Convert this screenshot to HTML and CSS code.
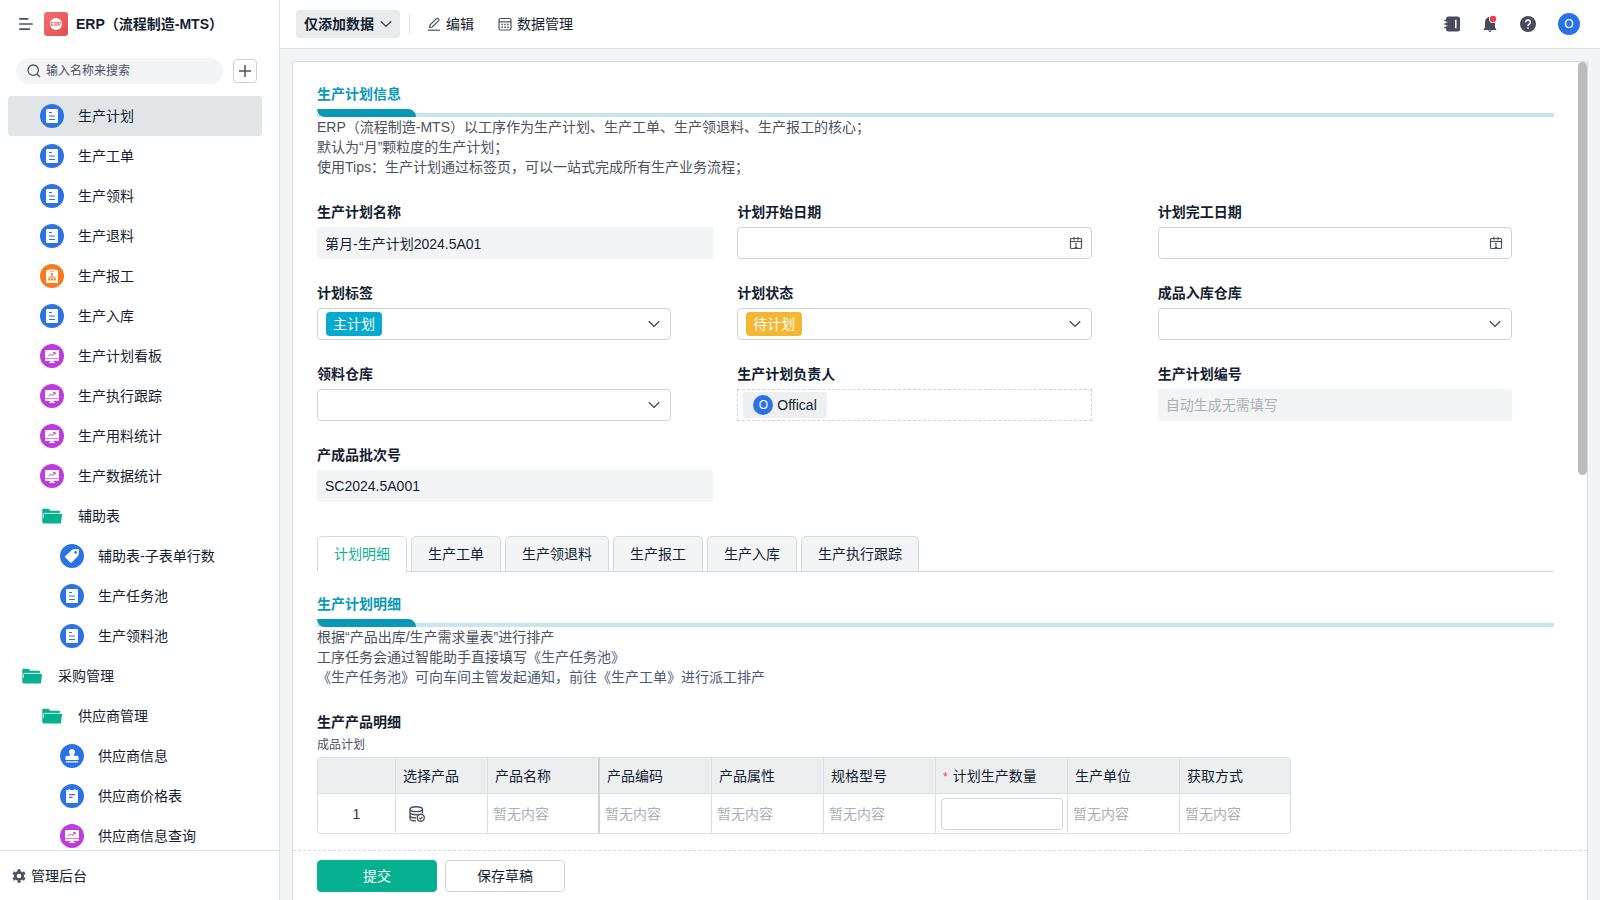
FILE: index.html
```html
<!DOCTYPE html>
<html lang="zh-CN">
<head>
<meta charset="utf-8">
<title>ERP（流程制造-MTS）</title>
<link rel="stylesheet" href="styles.css">
</head>
<body>
<svg class="sprite" aria-hidden="true">
  <symbol id="i-form" viewBox="0 0 24 24">
    <circle cx="12" cy="12" r="12" fill="#2a72e5"/>
    <rect x="6" y="5" width="12" height="14" rx="1" fill="#fff"/>
    <path d="M9 8.500h3M9 12h6M9 15.500h6" stroke="#2a72e5" stroke-width="1.1" fill="none"/>
  </symbol>
  <symbol id="i-flow" viewBox="0 0 24 24">
    <circle cx="12" cy="12" r="12" fill="#f97a1c"/>
    <path d="M7 6h2V5.200h6V6h2a1 1 0 0 1 1 1v11a1 1 0 0 1-1 1H7a1 1 0 0 1-1-1V7a1 1 0 0 1 1-1z" fill="#fff"/>
    <path d="M9.500 7h5" stroke="#f97a1c" stroke-width=".8"/>
    <path d="M12 10v5M9.200 15v-2h5.600v2" stroke="#f97a1c" stroke-width=".9" fill="none"/>
    <path d="M11 9.300h2v2h-2zM8.200 14.400h2v2h-2zM11 14.400h2v2h-2zM13.800 14.400h2v2h-2z" fill="#f97a1c"/>
  </symbol>
  <symbol id="i-board" viewBox="0 0 24 24">
    <circle cx="12" cy="12" r="12" fill="#bf3bdb"/>
    <rect x="5" y="6" width="14" height="11" rx="1" fill="#fff"/>
    <path d="M5 14.600h14" stroke="#bf3bdb" stroke-width=".7"/>
    <path d="M10.500 17h3v1H15v1H9v-1h1.500z" fill="#fff"/>
    <path d="M8.500 12l2-2 1.500 1.500L15 8.800M13 8.600h2.200v2" stroke="#bf3bdb" stroke-width="1" fill="none"/>
  </symbol>
  <symbol id="i-tag" viewBox="0 0 24 24">
    <circle cx="12" cy="12" r="12" fill="#2a72e5"/>
    <path d="M12.500 5.500l5-.5a1.300 1.300 0 0 1 1.500 1.500l-.5 5-6.800 7a1 1 0 0 1-1.400 0L5.300 13.400a1 1 0 0 1 0-1.400z" fill="#fff"/>
    <circle cx="15.600" cy="8.400" r="1.300" fill="#2a72e5"/>
  </symbol>
  <symbol id="i-stamp" viewBox="0 0 24 24">
    <circle cx="12" cy="12" r="12" fill="#2a72e5"/>
    <path d="M12 5a3 3 0 0 1 2 5.300c-.4.600-.3 1.200.3 1.400H17a1.500 1.500 0 0 1 1.500 1.500V16h-13v-2.800A1.500 1.500 0 0 1 7 11.700h2.700c.6-.2.700-.8.300-1.400A3 3 0 0 1 12 5zM6 17.300h12v1.200H6z" fill="#fff"/>
  </symbol>
  <symbol id="i-note" viewBox="0 0 24 24">
    <circle cx="12" cy="12" r="12" fill="#2a72e5"/>
    <path d="M7 6h1.500V5h1.200v1h4.600V5h1.200v1H17a1 1 0 0 1 1 1v11a1 1 0 0 1-1 1H7a1 1 0 0 1-1-1V7a1 1 0 0 1 1-1z" fill="#fff"/>
    <path d="M9 10.600h6M9 13.400h3.500" stroke="#2a72e5" stroke-width="1.200"/>
  </symbol>
  <symbol id="i-folder" viewBox="0 0 24 24">
    <path d="M2.300 19V5.800a1 1 0 0 1 1-1h5.200l1.800 2H19a1 1 0 0 1 1 1v2" fill="#07b08f"/>
    <path d="M4.500 9.500h16.700a.8.800 0 0 1 .8 1l-.9 8.100a1 1 0 0 1-1 .9H4a1.200 1.200 0 0 1-1.200-1.400z" fill="#07b08f"/>
    <path d="M3.300 14V10.600a1.200 1.200 0 0 1 1.200-1.200H21.500" stroke="#fff" stroke-width=".8" fill="none"/>
  </symbol>
  <symbol id="i-down" viewBox="0 0 12 12">
    <path d="M.8 3.200L6 8.400l5.200-5.200" stroke="#3c4353" stroke-width="1.300" fill="none"/>
  </symbol>
  <symbol id="i-date" viewBox="0 0 14 14">
    <rect x="1.500" y="2.500" width="11" height="10" rx="1" fill="none" stroke="#4b5160" stroke-width="1.200"/>
    <path d="M1.500 5.500h11M5 .8v3.700M9 .8v3.700M5.800 7.500H7v4.500M5.500 11.600h3" fill="none" stroke="#4b5160" stroke-width="1.100"/>
  </symbol>
</svg>

<div class="app">
  <aside class="sidebar">
    <div class="brand">
      <button class="icon-btn" type="button" aria-label="菜单">
        <svg width="14" height="14" viewBox="0 0 14 14"><path d="M.8 1.800h8M.8 7h12.400M.8 12.200h9.500" stroke="#4b5160" stroke-width="1.700" stroke-linecap="round"/></svg>
      </button>
      <span class="logo"><span class="logo-disc">ERP</span></span>
      <h1 class="brand-name">ERP（流程制造-MTS）</h1>
    </div>
    <div class="search-row">
      <label class="search">
        <svg width="14" height="14" viewBox="0 0 14 14"><circle cx="6.200" cy="6.200" r="5.200" fill="none" stroke="#4b5160" stroke-width="1.300"/><path d="M10 10l3 3" stroke="#4b5160" stroke-width="1.300"/></svg>
        <input class="search-input" type="text" placeholder="输入名称来搜索" aria-label="搜索">
      </label>
      <button class="add" type="button" aria-label="添加">
        <svg width="14" height="14" viewBox="0 0 14 14"><path d="M7 1v12M1 7h12" stroke="#4b5160" stroke-width="1.500"/></svg>
      </button>
    </div>
    <nav class="nav">
      <a class="nav-item level-1 active" href="#"><svg class="nav-icon"><use href="#i-form"/></svg>生产计划</a>
      <a class="nav-item level-1" href="#"><svg class="nav-icon"><use href="#i-form"/></svg>生产工单</a>
      <a class="nav-item level-1" href="#"><svg class="nav-icon"><use href="#i-form"/></svg>生产领料</a>
      <a class="nav-item level-1" href="#"><svg class="nav-icon"><use href="#i-form"/></svg>生产退料</a>
      <a class="nav-item level-1" href="#"><svg class="nav-icon"><use href="#i-flow"/></svg>生产报工</a>
      <a class="nav-item level-1" href="#"><svg class="nav-icon"><use href="#i-form"/></svg>生产入库</a>
      <a class="nav-item level-1" href="#"><svg class="nav-icon"><use href="#i-board"/></svg>生产计划看板</a>
      <a class="nav-item level-1" href="#"><svg class="nav-icon"><use href="#i-board"/></svg>生产执行跟踪</a>
      <a class="nav-item level-1" href="#"><svg class="nav-icon"><use href="#i-board"/></svg>生产用料统计</a>
      <a class="nav-item level-1" href="#"><svg class="nav-icon"><use href="#i-board"/></svg>生产数据统计</a>
      <a class="nav-item level-1" href="#"><svg class="nav-icon"><use href="#i-folder"/></svg>辅助表</a>
      <a class="nav-item level-2" href="#"><svg class="nav-icon"><use href="#i-tag"/></svg>辅助表-子表单行数</a>
      <a class="nav-item level-2" href="#"><svg class="nav-icon"><use href="#i-form"/></svg>生产任务池</a>
      <a class="nav-item level-2" href="#"><svg class="nav-icon"><use href="#i-form"/></svg>生产领料池</a>
      <a class="nav-item level-0" href="#"><svg class="nav-icon"><use href="#i-folder"/></svg>采购管理</a>
      <a class="nav-item level-1" href="#"><svg class="nav-icon"><use href="#i-folder"/></svg>供应商管理</a>
      <a class="nav-item level-2" href="#"><svg class="nav-icon"><use href="#i-stamp"/></svg>供应商信息</a>
      <a class="nav-item level-2" href="#"><svg class="nav-icon"><use href="#i-note"/></svg>供应商价格表</a>
      <a class="nav-item level-2" href="#"><svg class="nav-icon"><use href="#i-board"/></svg>供应商信息查询</a>
    </nav>
    <a class="admin" href="#">
      <svg width="14" height="14" viewBox="0 0 14 14"><circle cx="7" cy="7" r="3.700" fill="none" stroke="#4b5160" stroke-width="2.800"/><path d="M7 .3v2M7 11.700v2M1.200 3.650l1.700 1M11.100 9.350l1.700 1M1.200 10.350l1.700-1M11.100 4.650l1.700-1" stroke="#4b5160" stroke-width="3"/></svg>
      管理后台
    </a>
  </aside>

  <div class="main">
    <header class="topbar">
      <button class="mode" type="button">仅添加数据<svg width="12" height="12"><use href="#i-down"/></svg></button>
      <span class="divider"></span>
      <button class="tool" type="button">
        <svg width="14" height="14" viewBox="0 0 14 14"><path d="M1 13.200h12" stroke="#4b5160" stroke-width="1.200"/><path d="M2.500 10.500l.6-2.700 6.700-6.400a.8.800 0 0 1 1.100 0l.9.900a.8.800 0 0 1 0 1.100L5.200 10z" fill="none" stroke="#4b5160" stroke-width="1.200"/></svg>编辑
      </button>
      <button class="tool" type="button">
        <svg width="14" height="14" viewBox="0 0 14 14"><rect x="1" y="1.500" width="12" height="11.500" rx="1.500" fill="none" stroke="#4b5160" stroke-width="1.200"/><path d="M1 4.800h12" stroke="#4b5160" stroke-width="1.200"/><path d="M3.400 7.400h7.400M3.400 10.300h7.400" stroke="#4b5160" stroke-width="1.500" stroke-dasharray="1.500 1.400"/></svg>数据管理
      </button>
      <div class="actions">
        <button class="icon-btn" type="button" aria-label="通讯录"><svg width="16" height="16" viewBox="0 0 16 16"><rect x="2" y=".5" width="14" height="15" rx="2.500" fill="#474c5b"/><path d="M.3 4.500h3M.3 8h3M.3 11.500h3" stroke="#474c5b" stroke-width="1.500"/><path d="M2 6.200h1.500M2 9.800h1.500" stroke="#fff" stroke-width=".8"/><path d="M11.800 3.800v8.400" stroke="#fff" stroke-width="1.500"/></svg></button>
        <button class="icon-btn" type="button" aria-label="消息"><svg width="16" height="18" viewBox="0 0 16 18"><path d="M8 2a5 5 0 0 1 5 5v5.500l1.200 1.500v1H1.800v-1L3 12.500V7a5 5 0 0 1 5-5zM5.700 15.400h4.600L8 17.300z" fill="#474c5b"/><circle cx="11" cy="4" r="4" fill="#fff"/><circle cx="11" cy="4" r="3.200" fill="#ee4048"/></svg></button>
        <button class="icon-btn" type="button" aria-label="帮助"><svg width="16" height="16" viewBox="0 0 16 16"><circle cx="8" cy="8" r="8" fill="#474c5b"/><path d="M5.700 6.200a2.300 2.300 0 1 1 3.500 2c-.8.500-1.200.8-1.200 1.800M8 11.200v1.500" stroke="#fff" stroke-width="1.500" fill="none"/></svg></button>
        <button class="avatar avatar-lg" type="button">O</button>
      </div>
    </header>

    <main class="card">
      <form class="form-body">
        <section>
          <h2 class="section-title">生产计划信息</h2>
          <div class="section-rule"><span class="section-mark"></span></div>
          <p class="desc">ERP（流程制造-MTS）以工序作为生产计划、生产工单、生产领退料、生产报工的核心；<br>默认为“月”颗粒度的生产计划；<br>使用Tips：生产计划通过标签页，可以一站式完成所有生产业务流程；</p>
        </section>

        <div class="fields">
          <div class="field wide"><label class="label" for="f-name">生产计划名称</label><input class="control readonly" id="f-name" type="text" value="第月-生产计划2024.5A01" readonly></div>
          <div class="field"><label class="label" for="f-start">计划开始日期</label><div class="control box"><input class="bare" id="f-start" type="text"><svg width="14" height="14"><use href="#i-date"/></svg></div></div>
          <div class="field"><label class="label" for="f-end">计划完工日期</label><div class="control box"><input class="bare" id="f-end" type="text"><svg width="14" height="14"><use href="#i-date"/></svg></div></div>
          <div class="field"><label class="label" for="f-tag">计划标签</label><div class="control box"><select class="chip chip-cyan" id="f-tag"><option>主计划</option></select><svg class="arrow" width="12" height="12"><use href="#i-down"/></svg></div></div>
          <div class="field"><label class="label" for="f-state">计划状态</label><div class="control box"><select class="chip chip-amber" id="f-state"><option>待计划</option></select><svg class="arrow" width="12" height="12"><use href="#i-down"/></svg></div></div>
          <div class="field"><label class="label" for="f-in">成品入库仓库</label><div class="control box"><select class="bare" id="f-in"><option></option></select><svg class="arrow" width="12" height="12"><use href="#i-down"/></svg></div></div>
          <div class="field"><label class="label" for="f-out">领料仓库</label><div class="control box"><select class="bare" id="f-out"><option></option></select><svg class="arrow" width="12" height="12"><use href="#i-down"/></svg></div></div>
          <div class="field"><span class="label">生产计划负责人</span><div class="control members"><span class="member"><span class="avatar">O</span>Offical</span></div></div>
          <div class="field"><label class="label" for="f-no">生产计划编号</label><input class="control readonly" id="f-no" type="text" placeholder="自动生成无需填写" readonly></div>
          <div class="field wide"><label class="label" for="f-batch">产成品批次号</label><input class="control readonly" id="f-batch" type="text" value="SC2024.5A001" readonly></div>
        </div>

        <div class="tabs" role="tablist">
          <button class="tab selected" type="button" role="tab" aria-selected="true">计划明细</button>
          <button class="tab" type="button" role="tab">生产工单</button>
          <button class="tab" type="button" role="tab">生产领退料</button>
          <button class="tab" type="button" role="tab">生产报工</button>
          <button class="tab" type="button" role="tab">生产入库</button>
          <button class="tab" type="button" role="tab">生产执行跟踪</button>
        </div>

        <section class="detail">
          <h2 class="section-title">生产计划明细</h2>
          <div class="section-rule"><span class="section-mark"></span></div>
          <p class="desc">根据“产品出库/生产需求量表”进行排产<br>工序任务会通过智能助手直接填写<span class="slate">《生产任务池》<br>《生产任务池》可向车间主管发起通知，前往《生产工单》进行派工排产</span></p>
        </section>

        <section class="products">
          <h3 class="label">生产产品明细</h3>
          <p class="hint">成品计划</p>
          <table class="grid">
            <colgroup><col class="c-index"><col class="c-pick"><col class="c-text"><col class="c-text"><col class="c-text"><col class="c-text"><col class="c-qty"><col class="c-text"><col class="c-text"></colgroup>
            <thead>
              <tr><th></th><th>选择产品</th><th class="pinned">产品名称</th><th>产品编码</th><th>产品属性</th><th>规格型号</th><th><span class="required">*</span>计划生产数量</th><th>生产单位</th><th>获取方式</th></tr>
            </thead>
            <tbody>
              <tr>
                <td class="index">1</td>
                <td class="pick"><button class="icon-btn" type="button" aria-label="选择产品"><svg width="16" height="16" viewBox="0 0 16 16"><g fill="none" stroke="#4b5160" stroke-width="1.400"><ellipse cx="7.200" cy="3.200" rx="6.200" ry="2.400"/><path d="M1 3.200v9.300c0 1.300 2.600 2.400 6 2.400M13.400 3.200v4M1 6.300c0 1.300 2.800 2.400 6.200 2.400 1 0 2-.1 2.800-.3M1 9.400c0 1.300 2.600 2.400 6 2.400"/><circle cx="11.800" cy="11.800" r="3.500"/><path d="M10.200 11.800l1.200 1.100 2-2"/></g></svg></button></td>
                <td class="empty pinned">暂无内容</td><td class="empty">暂无内容</td><td class="empty">暂无内容</td><td class="empty">暂无内容</td>
                <td class="qty"><input class="qty-input" type="text" aria-label="计划生产数量"></td>
                <td class="empty">暂无内容</td><td class="empty">暂无内容</td>
              </tr>
            </tbody>
          </table>
        </section>
      </form>
      <footer class="form-footer">
        <button class="btn primary" type="button">提交</button>
        <button class="btn" type="button">保存草稿</button>
      </footer>
      <span class="scroll-thumb"></span>
    </main>
  </div>
</div>
</body>
</html>
```

FILE: styles.css
```css
* { box-sizing: border-box; }

body {
  margin: 0;
  background: #f2f4f6;
  color: #141e31;
  font: 14px/20px "Liberation Sans", "Noto Sans CJK SC", sans-serif;
}

h1, h2, h3, p { margin: 0; font-size: 14px; }
button, input, select { font: inherit; color: inherit; }
button { cursor: pointer; }
a { color: inherit; text-decoration: none; }
svg { flex: none; display: block; }

.sprite { position: absolute; width: 0; height: 0; }

.app { display: flex; height: 100vh; }

/* Sidebar */
.sidebar {
  display: flex;
  flex: none;
  flex-direction: column;
  width: 280px;
  border-right: 1px solid #dfe2e6;
  background: #fff;
}

.brand {
  display: flex;
  align-items: center;
  height: 48px;
  padding-left: 19px;
}

.icon-btn {
  display: block;
  padding: 0;
  border: 0;
  background: none;
}

.logo {
  display: grid;
  place-items: center;
  width: 24px;
  height: 24px;
  margin: 0 8px 0 11px;
  border-radius: 3px;
  background: linear-gradient(135deg, #f07070, #e74d55);
}

.logo-disc {
  width: 12px;
  height: 12px;
  border-radius: 50%;
  background: #fff;
  color: #ea5a60;
  font-size: 5px;
  font-weight: 700;
  line-height: 12px;
  text-align: center;
}

.search-row {
  display: flex;
  align-items: center;
  gap: 10px;
  padding: 10px 22px 12px 16px;
}

.search {
  display: flex;
  flex: 1;
  align-items: center;
  gap: 5px;
  height: 26px;
  padding: 0 11px;
  border-radius: 13px;
  background: #f2f4f6;
}

.search-input {
  flex: 1;
  min-width: 0;
  height: 24px;
  padding: 0;
  border: 0;
  outline: 0;
  background: none;
  font-size: 12px;
}

.search-input::placeholder { color: #4b5160; }

.add {
  display: grid;
  place-items: center;
  width: 24px;
  height: 24px;
  padding: 0;
  border: 1px solid #ced1d6;
  border-radius: 4px;
  background: #fff;
}

.nav {
  flex: 1;
  min-height: 0;
  overflow: hidden;
  padding: 0 17px 0 8px;
}

.nav-item {
  display: flex;
  align-items: center;
  gap: 14px;
  height: 40px;
  border-radius: 3px;
}

.nav-item.active { background: #e1e5e8; }
.nav-icon { width: 24px; height: 24px; }
.level-0 { padding-left: 12px; }
.level-1 { padding-left: 32px; }
.level-2 { padding-left: 52px; }

.admin {
  display: flex;
  align-items: center;
  gap: 5px;
  height: 50px;
  padding-left: 12px;
  border-top: 1px solid #dfe2e6;
}

/* Top bar */
.main {
  display: flex;
  flex: 1;
  flex-direction: column;
  min-width: 0;
}

.topbar {
  display: flex;
  align-items: center;
  height: 49px;
  padding: 0 20px 0 16px;
  border-bottom: 1px solid #dfe2e6;
  background: #fff;
}

.mode {
  display: flex;
  align-items: center;
  gap: 6px;
  height: 28px;
  padding: 0 8px;
  border: 0;
  border-radius: 3px;
  background: #e9ecef;
  font-weight: 700;
}

.divider {
  width: 1px;
  height: 20px;
  margin: 0 17px 0 9px;
  background: #dcdfe3;
}

.tool {
  display: flex;
  align-items: center;
  gap: 5px;
  margin-right: 24px;
  padding: 0;
  border: 0;
  background: none;
}

.actions {
  display: flex;
  align-items: center;
  gap: 22px;
  margin-left: auto;
}

.avatar {
  display: grid;
  place-items: center;
  width: 20px;
  height: 20px;
  padding: 0;
  border: 0;
  border-radius: 50%;
  background: #2a72e5;
  color: #fff;
  font-size: 12px;
}

.avatar-lg { width: 22px; height: 22px; }

/* Form card */
.card {
  position: relative;
  display: flex;
  flex: 1;
  flex-direction: column;
  min-height: 0;
  margin: 12px 12px 0;
  border: 1px solid #d9dce0;
  border-bottom: 0;
  border-radius: 3px 3px 0 0;
  background: #fff;
}

.form-body {
  flex: 1;
  min-height: 0;
  overflow: hidden;
  padding: 22px 33px 0 24px;
}

.scroll-thumb {
  position: absolute;
  top: 0;
  right: 0;
  width: 9px;
  height: 413px;
  border-radius: 5px;
  background: #b9bbbe;
}

.section-title { color: #0a98b8; }

.section-rule {
  height: 8px;
  margin-top: 5px;
  background: linear-gradient(#c9e6ef, #c9e6ef) bottom / 100% 4px no-repeat;
}

.section-mark {
  display: block;
  width: 99px;
  height: 8px;
  border-radius: 0 8px 0 8px;
  background: #0a98b8;
}

.desc { color: #4b5160; }
.slate { color: #4a5875; }

.fields {
  display: grid;
  grid-template-columns: repeat(3, minmax(0, 1fr));
  gap: 24px;
  margin-top: 25px;
}

.field { padding-right: 42px; }
.field.wide { padding-right: 0; }

.label {
  display: block;
  height: 20px;
  font-weight: 700;
}

.control {
  display: flex;
  align-items: center;
  width: 100%;
  height: 32px;
  margin-top: 5px;
  border: 1px solid #d0d3d8;
  border-radius: 4px;
  background: #fff;
}

.readonly {
  padding: 0 8px;
  border: 0;
  border-radius: 2px;
  outline: 0;
  background: #f2f4f6;
}

.readonly::placeholder { color: #acb0b8; }

.box {
  justify-content: space-between;
  padding: 0 8px;
}

.arrow { margin-right: 2px; }

.bare {
  flex: 1;
  min-width: 0;
  height: 28px;
  padding: 0;
  border: 0;
  outline: 0;
  appearance: none;
  background: none;
}

.chip {
  height: 24px;
  padding: 0 7px;
  border: 0;
  border-radius: 4px;
  appearance: none;
  color: #fff;
}

.chip-cyan { background: #06aace; }
.chip-amber { background: #f4b734; }

.members {
  padding: 0 5px;
  border: 1px dashed #d0d3d8;
  border-radius: 0;
}

.member {
  display: flex;
  align-items: center;
  gap: 4px;
  height: 26px;
  padding: 0 10px;
  border-radius: 2px;
  background: #edeff1;
}

/* Tabs */
.tabs {
  display: flex;
  gap: 4px;
  margin-top: 34px;
  border-bottom: 1px solid #d6d9dd;
}

.tab {
  height: 35px;
  padding: 0 16px;
  border: 1px solid #d6d9dd;
  border-bottom: 0;
  border-radius: 5px 5px 0 0;
  background: #f2f4f6;
}

.tab.selected {
  height: 36px;
  margin-bottom: -1px;
  padding-bottom: 1px;
  background: #fff;
  color: #07b08f;
}

.detail { margin-top: 22px; }
.products { margin-top: 25px; }

.hint {
  margin-top: 3px;
  color: #4b5160;
  font-size: 12px;
}

/* Product table */
.grid {
  width: 974px;
  margin-top: 2px;
  border: 1px solid #dcdfe2;
  border-radius: 3px;
  border-spacing: 0;
  overflow: hidden;
  table-layout: fixed;
}

.c-text { width: 112px; }
.c-index { width: 78px; }
.c-pick { width: 92px; }
.c-qty { width: 132px; }
.c-text:last-child { width: 110px; }

.grid th {
  height: 36px;
  padding: 0 7px;
  border-right: 1px solid #dcdfe2;
  border-bottom: 1px solid #dcdfe2;
  background: #eceef0;
  font-weight: 400;
  text-align: left;
  white-space: nowrap;
}

.grid td {
  height: 39px;
  padding: 0 5px;
  border-right: 1px solid #dcdfe2;
}

.grid tr > :last-child { border-right: 0; }
.grid tr > .pinned { border-right: 2px solid #cfd2d5; }
.grid .empty { color: #acb0b8; }
.grid .index { color: #32384a; text-align: center; }
.grid .pick { padding-left: 13px; }
.grid .qty { padding: 0 4px 0 5px; }

.required {
  margin-right: 5px;
  color: #ee4048;
  font-size: 12px;
  line-height: 12px;
}

.qty-input {
  display: block;
  width: 100%;
  height: 32px;
  padding: 0 8px;
  border: 1px solid #d0d3d8;
  border-radius: 4px;
}

/* Footer */
.form-footer {
  display: flex;
  gap: 8px;
  padding: 9px 24px 8px;
  border-top: 1px dashed #d6d9dd;
}

.btn {
  width: 120px;
  height: 32px;
  padding: 0;
  border: 1px solid #d0d3d8;
  border-radius: 4px;
  background: #fff;
}

.btn.primary {
  border-color: #04b08f;
  background: #04b08f;
  color: #fff;
}
```
